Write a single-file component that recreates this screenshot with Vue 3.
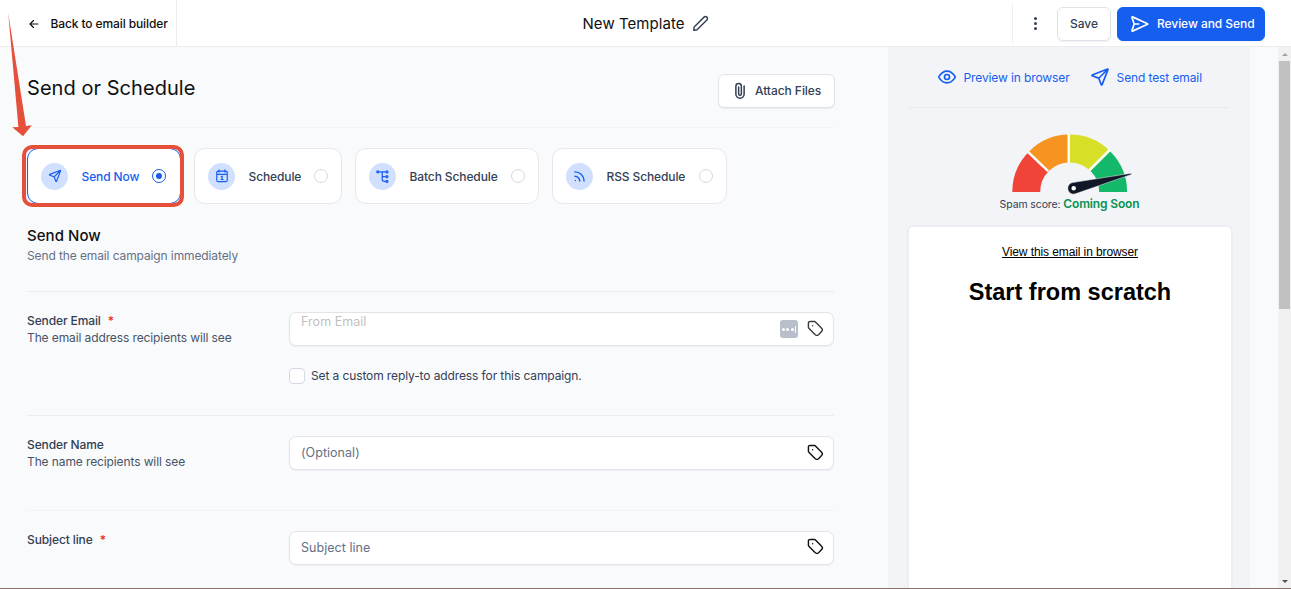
<script setup>
import { ref } from 'vue'

const icons = {
  back: 'M20 12H4M11 19l-7-7 7-7',
  pencil: 'M2.876 18.116c.046-.414.069-.62.131-.814a2 2 0 0 1 .234-.485c.111-.17.258-.317.553-.61L17 3a2.828 2.828 0 1 1 4 4L7.794 20.206c-.294.294-.442.442-.611.553a2 2 0 0 1-.485.233c-.193.063-.4.086-.814.132L2.5 21.5z',
  review: 'M10.5 12H5M4.915 12.292l-2.334 6.974c-.184.548-.275.822-.21.99a.5.5 0 0 0 .331.3c.175.05.438-.07.965-.306l16.71-7.52c.514-.231.771-.347.85-.508a.5.5 0 0 0 0-.443c-.079-.16-.336-.276-.85-.508L3.661 3.75c-.525-.237-.788-.355-.962-.307a.5.5 0 0 0-.331.3c-.066.168.025.442.207.99l2.341 7.05c.032.094.047.14.053.189a.5.5 0 0 1 0 .128c-.006.049-.022.096-.054.192z',
  clip: 'M17.5 5.25V16a5.5 5.5 0 0 1-11 0V5.667a3.667 3.667 0 0 1 7.333 0v10.279a1.833 1.833 0 0 1-3.666 0V6.6',
  send: 'M10.5 13.5 21 3M10.627 13.828l2.628 6.758c.232.596.347.893.514.98a.5.5 0 0 0 .462 0c.167-.086.283-.384.515-.979l6.59-16.888c.21-.537.315-.806.258-.977a.5.5 0 0 0-.316-.316c-.172-.057-.44.048-.978.257L3.413 9.253c-.595.233-.893.349-.98.516a.5.5 0 0 0 0 .461c.087.167.385.283.98.514l6.758 2.629c.121.047.182.07.233.106a.5.5 0 0 1 .116.117c.037.051.06.111.107.232z',
  eye: 'M2.42 12.713c-.136-.215-.204-.323-.242-.49a1.173 1.173 0 0 1 0-.446c.038-.167.106-.274.242-.49C3.546 9.505 6.895 5 12 5s8.455 4.505 9.58 6.287c.137.215.205.323.243.49.029.125.029.322 0 .446-.038.167-.106.274-.242.49C20.455 14.495 17.105 19 12 19c-5.106 0-8.455-4.505-9.58-6.287zM15 12a3 3 0 1 1-6 0 3 3 0 0 1 6 0z',
  tag: 'M8 8h.01M2 5.2v4.475c0 .489 0 .733.055.963.05.204.13.4.24.579.123.201.296.374.642.72l7.669 7.669c1.188 1.188 1.782 1.782 2.467 2.004a3 3 0 0 0 1.854 0c.685-.222 1.28-.816 2.467-2.004l2.212-2.212c1.188-1.188 1.782-1.782 2.004-2.467a3 3 0 0 0 0-1.854c-.222-.685-.816-1.28-2.004-2.467l-7.669-7.669c-.346-.346-.519-.519-.72-.642a2 2 0 0 0-.579-.24C10.409 2 10.165 2 9.676 2H5.2c-1.12 0-1.68 0-2.108.218a2 2 0 0 0-.874.874C2 3.52 2 4.08 2 5.2z',
  calendar: 'M3 9.2h18M7 1.6v4M17 1.6v4M5.5 3.6h13A2.5 2.5 0 0 1 21 6.1v13a2.5 2.5 0 0 1-2.5 2.5h-13A2.5 2.5 0 0 1 3 19.1v-13a2.5 2.5 0 0 1 2.5-2.5zM10.8 13.2l1.4-1v5.6M10.4 18h3.6',
  batch: 'M5 3.600H18.400M11.500 3.600V17a4 4 0 0 0 4 4H18.400M11.500 12.300H18.400M5 3.600a1.800 1.800 0 1 1-3.600 0 1.800 1.800 0 0 1 3.600 0zM22 3.600a1.800 1.800 0 1 1-3.600 0 1.800 1.800 0 0 1 3.600 0zM22 12.300a1.800 1.800 0 1 1-3.600 0 1.800 1.800 0 0 1 3.600 0zM22 21a1.800 1.800 0 1 1-3.600 0 1.800 1.800 0 0 1 3.600 0z',
  rss: 'M3.500 11.500a9 9 0 0 1 9 9M3.500 3.500a17 17 0 0 1 17 17M4.500 19.500h.01',
}

const selected = ref('now')

const modes = [
  { id: 'now', label: 'Send Now', icon: icons.send },
  { id: 'schedule', label: 'Schedule', icon: icons.calendar },
  { id: 'batch', label: 'Batch Schedule', icon: icons.batch },
  { id: 'rss', label: 'RSS Schedule', icon: icons.rss },
]

const fields = [
  { id: 'email', label: 'Sender Email', hint: 'The email address recipients will see', placeholder: 'From Email', required: true },
  { id: 'name', label: 'Sender Name', hint: 'The name recipients will see', placeholder: '(Optional)' },
  { id: 'subject', label: 'Subject line', placeholder: 'Subject line', required: true },
]
</script>

<template>
  <div class="page">
    <header class="topbar">
      <a class="topbar__back">
        <svg class="icon icon--back" viewBox="0 0 24 24"><path :d="icons.back" /></svg>
        <span>Back to email builder</span>
      </a>
      <div class="topbar__title">
        <span>New Template</span>
        <svg class="icon icon--pencil" viewBox="0 0 24 24"><path :d="icons.pencil" /></svg>
      </div>
      <div class="topbar__actions">
        <span class="topbar__more"><i></i><i></i><i></i></span>
        <button class="btn btn--save">Save</button>
        <button class="btn btn--primary">
          <svg class="icon icon--review" viewBox="0 0 24 24"><path :d="icons.review" /></svg>
          <span>Review and Send</span>
        </button>
      </div>
    </header>

    <div class="body">
      <main class="main">
        <div class="main__head">
          <h1>Send or Schedule</h1>
          <button class="btn btn--attach">
            <svg class="icon icon--clip" viewBox="0 0 24 24"><path :d="icons.clip" /></svg>
            <span>Attach Files</span>
          </button>
        </div>

        <div class="modes">
          <div
            v-for="mode in modes"
            :key="mode.id"
            class="mode"
            :class="[`mode--${mode.id}`, { 'mode--active': mode.id === selected }]"
            @click="selected = mode.id"
          >
            <span class="mode__badge">
              <svg class="icon" viewBox="0 0 24 24"><path :d="mode.icon" /></svg>
            </span>
            <span class="mode__label">{{ mode.label }}</span>
            <span class="mode__radio"></span>
          </div>
        </div>

        <section class="intro">
          <h2>Send Now</h2>
          <p>Send the email campaign immediately</p>
        </section>

        <section v-for="field in fields" :key="field.id" class="row" :class="`row--${field.id}`">
          <div class="row__label">
            <div class="row__name">{{ field.label }}<b v-if="field.required">*</b></div>
            <div v-if="field.hint" class="row__hint">{{ field.hint }}</div>
          </div>
          <div class="row__control">
            <div class="input">
              <span class="input__placeholder">{{ field.placeholder }}</span>
              <span v-if="field.id === 'email'" class="input__manager"><i></i><i></i><i></i><u></u></span>
              <svg class="icon icon--tag" viewBox="0 0 24 24"><path :d="icons.tag" /></svg>
            </div>
            <label v-if="field.id === 'email'" class="check">
              <span class="check__box"></span>
              <span class="check__text">Set a custom reply-to address for this campaign.</span>
            </label>
          </div>
        </section>
      </main>

      <aside class="side">
        <div class="side__links">
          <a class="side__link">
            <svg class="icon icon--link" viewBox="0 0 24 24"><path :d="icons.eye" /></svg>
            <span>Preview in browser</span>
          </a>
          <a class="side__link">
            <svg class="icon icon--link" viewBox="0 0 24 24"><path :d="icons.send" /></svg>
            <span>Send test email</span>
          </a>
        </div>
        <svg class="gauge" viewBox="0 0 124 64">
          <path fill="#f04438" d="M2.300 60A57.400 57.400 0 0 1 19.100 19.400L38.800 39.100A29.500 29.500 0 0 0 30.200 60z" />
          <path fill="#f79421" d="M19.100 19.400A57.400 57.400 0 0 1 59.700 2.600V30.500A29.500 29.500 0 0 0 38.800 39.100z" />
          <path fill="#d7df27" d="M59.700 2.600A57.400 57.400 0 0 1 100.300 19.400L80.600 39.100A29.500 29.500 0 0 0 59.700 30.500z" />
          <path fill="#14b869" d="M100.300 19.400A57.400 57.400 0 0 1 117.100 60H89.200A29.500 29.500 0 0 0 80.600 39.100z" />
          <path stroke="#fff" stroke-width="2.400" d="M17.600 19.700l20.500 19.500M58.700 2v29M100 17.700L79.500 38.200" />
          <path
            fill="#101828"
            stroke="#f2f4f7"
            stroke-width=".5"
            d="M121.500 41.200v1.200L65.400 61.800A5.800 5.800 0 1 1 62.500 50.600z"
          />
          <circle cx="63.700" cy="56.300" r="2.200" fill="#fff" />
        </svg>
        <div class="score">Spam score: <b>Coming Soon</b></div>
        <div class="mail">
          <a class="mail__link">View this email in browser</a>
          <div class="mail__title">Start from scratch</div>
        </div>
      </aside>

      <div class="gutter"></div>
      <div class="scrollbar">
        <span class="scrollbar__up"></span>
        <span class="scrollbar__thumb"></span>
        <span class="scrollbar__down"></span>
      </div>
    </div>

    <!-- callout pointing at the selected mode -->
    <div class="callout-box"></div>
    <svg class="callout-arrow" viewBox="0 0 40 140">
      <path d="M8.200 13 26 126l5.900-.7L23 136.200 12.300 127.300l6.100-.4z" />
    </svg>
  </div>
</template>

<style>
body {
  margin: 0;
  overflow: hidden;
}
</style>

<style scoped>
.page {
  position: relative;
  display: flex;
  flex-direction: column;
  box-sizing: border-box;
  width: 1291px;
  height: 589px;
  overflow: hidden;
  border-bottom: 1px solid #8c706e;
  background: #f9fafc;
  font-family: Inter, 'Liberation Sans', sans-serif;
  font-size: 12px;
  line-height: 16px;
  letter-spacing: -0.11px;
  color: #344054;
}

.page * {
  box-sizing: border-box;
}

h1,
h2,
p {
  margin: 0;
  font-weight: 400;
}

span,
a,
.row__name,
.row__hint,
.score {
  white-space: nowrap;
}

.icon {
  display: block;
  flex: none;
  fill: none;
  stroke: currentColor;
  stroke-width: 2;
  stroke-linecap: round;
  stroke-linejoin: round;
}

.topbar {
  display: grid;
  grid-template-columns: 177px 1fr 279px;
  flex: none;
  height: 47px;
  border-bottom: 1px solid #eaecf0;
  background: #fff;
}

.topbar__back {
  display: flex;
  align-items: center;
  gap: 11px;
  padding: 1px 0 0 27.500px;
  border-right: 1px solid #eaecf0;
  font-weight: 500;
  color: #101010;
}

.icon--back {
  width: 12px;
  height: 12px;
  stroke-width: 2.300;
}

.topbar__title {
  display: flex;
  align-items: center;
  gap: 7px;
  padding: 1px 0 0 405.500px;
  font-size: 15px;
  letter-spacing: 0.05px;
  color: #101010;
}

.icon--pencil {
  width: 17px;
  height: 17px;
  color: #344054;
}

.topbar__actions {
  display: flex;
  align-items: center;
  padding-top: 1px;
}

.topbar__actions::before {
  content: '';
  align-self: flex-start;
  width: 1px;
  height: 42px;
  margin-top: 1px;
  background: #f0f1f4;
}

.topbar__more {
  display: flex;
  flex-direction: column;
  gap: 2px;
  margin: 0 20px 0 21px;
}

.topbar__more i {
  width: 3px;
  height: 3px;
  border-radius: 50%;
  background: #344054;
}

.btn {
  display: flex;
  align-items: center;
  height: 34px;
  padding: 0;
  border: 1px solid #dfe2e8;
  border-radius: 6px;
  background: #fff;
  box-shadow: 0 1px 1px rgba(16, 24, 40, 0.06);
  font: 500 12px/16px Inter, sans-serif;
  letter-spacing: -0.06px;
  color: #344054;
}

.btn--save {
  justify-content: center;
  width: 54px;
}

.btn--primary {
  gap: 7px;
  width: 148px;
  margin-left: 6px;
  padding-left: 12px;
  border-color: #155eef;
  background: #155eef;
  color: #fff;
}

.icon--review {
  width: 20px;
  height: 20px;
}

.btn--attach {
  gap: 6px;
  width: 117px;
  margin-right: -1px;
  padding-left: 12px;
}

.icon--clip {
  width: 18px;
  height: 18px;
}

.body {
  display: flex;
  flex: 1;
  min-height: 0;
}

.main {
  width: 888px;
  padding: 0 54px 0 27px;
}

.main__head {
  display: flex;
  justify-content: space-between;
  height: 81px;
  padding-top: 27px;
  border-bottom: 1px solid #f1f2f5;
}

.main__head h1 {
  font-size: 20px;
  line-height: 28px;
  letter-spacing: 0.05px;
  color: #101010;
}

.modes {
  display: flex;
  gap: 13px;
  height: 76px;
  padding-top: 20px;
}

.mode {
  display: flex;
  align-items: center;
  flex: none;
  height: 56px;
  padding: 0 13px;
  border: 1px solid #e6e8ec;
  border-radius: 11px;
  background: #fff;
  font-weight: 500;
}

.mode--now {
  width: 154px;
}

.mode--schedule {
  width: 148px;
}

.mode--batch {
  width: 184px;
}

.mode--rss {
  width: 175px;
}

.mode__badge {
  display: flex;
  align-items: center;
  justify-content: center;
  width: 27px;
  height: 27px;
  margin-right: 13.500px;
  border-radius: 50%;
  background: #d1e0ff;
  color: #155eef;
}

.mode__label {
  padding-top: 1px;
}

.mode__badge .icon {
  width: 14px;
  height: 14px;
}

.mode--batch .icon {
  width: 13px;
  height: 13px;
  stroke-width: 2.300;
}

.mode--rss .icon {
  width: 13px;
  height: 13px;
  stroke-width: 2.600;
}

.mode__radio {
  display: flex;
  align-items: center;
  justify-content: center;
  width: 14px;
  height: 14px;
  margin-left: auto;
  border: 1px solid #d5d9e0;
  border-radius: 50%;
  background: #fff;
}

.mode--active {
  padding-right: 14px;
  border-color: #155eef;
  color: #155eef;
}

.mode--active .mode__radio {
  border-color: #155eef;
}

.mode--active .mode__radio::after {
  content: '';
  width: 6px;
  height: 6px;
  border-radius: 50%;
  background: #155eef;
}

.intro {
  height: 87px;
  padding-top: 22px;
}

.intro h2 {
  font-size: 15px;
  font-weight: 500;
  line-height: 20px;
  letter-spacing: 0.05px;
  color: #101010;
}

.intro p {
  margin-top: 2px;
  color: #667085;
}

.row {
  display: grid;
  grid-template-columns: 262px 1fr;
  border-top: 1px solid #eaecf0;
}

.row--email {
  height: 124px;
}

.row--name {
  height: 95px;
}

.row--subject {
  border-top-color: #f1f2f5;
}

.row__label {
  padding-top: 21px;
  color: #475467;
}

.row__name {
  font-weight: 500;
  color: #344054;
}

.row__name b {
  margin-left: 7px;
  font-weight: 500;
  color: #e02b2b;
}

.row__hint {
  margin-top: 1px;
}

.row__control {
  padding-top: 20px;
}

.row--subject .row__control {
  padding-top: 19.500px;
}

.input {
  display: flex;
  align-items: center;
  height: 34px;
  padding: 0 9px 0 11px;
  border: 1px solid #e2e4ea;
  border-radius: 7px;
  background: #fff;
  box-shadow: 0 1px 1px rgba(16, 24, 40, 0.05);
}

.input__placeholder {
  margin-right: auto;
  font-size: 12.500px;
  letter-spacing: 0.04px;
  color: #667085;
}

.row--email .input__placeholder {
  align-self: flex-start;
  padding-top: 1px;
  color: #bfbfbf;
}

.input__manager {
  display: flex;
  align-items: center;
  justify-content: center;
  gap: 1.500px;
  width: 18px;
  height: 18px;
  margin-right: 9px;
  border-radius: 3px;
  background: #b8bfcb;
}

.input__manager i {
  width: 3px;
  height: 3px;
  border-radius: 50%;
  background: #fff;
}

.input__manager u {
  width: 1px;
  height: 7px;
  background: #fff;
}

.icon--tag {
  width: 17px;
  height: 17px;
  margin-bottom: 1.500px;
  color: #101010;
}

.row--email .icon--tag {
  color: #3a3a3a;
}

.check {
  display: flex;
  align-items: center;
  gap: 6px;
  margin-top: 21px;
}

.check__box {
  width: 16px;
  height: 16px;
  border: 1px solid #d5d9e2;
  border-radius: 4px;
  background: #fff;
}

.check__text {
  padding-top: 1px;
}

.side {
  display: flex;
  flex-direction: column;
  align-items: center;
  width: 362px;
  padding: 0 18px 0 20px;
  background: #f2f4f7;
}

.side__links {
  display: flex;
  align-items: center;
  align-self: flex-start;
  gap: 20px;
  width: 321px;
  height: 61px;
  padding-left: 28.500px;
  border-bottom: 1px solid #e8eaee;
  color: #155eef;
}

.side__link {
  display: flex;
  align-items: center;
  gap: 7px;
}

.side__link span {
  padding-top: 1px;
}

.icon--link {
  width: 20px;
  height: 20px;
}

.gauge {
  width: 124px;
  height: 64px;
  margin: 24px 0 0 3px;
  fill: none;
}

.score {
  margin-right: 1px;
  font-size: 10.500px;
}

.score b {
  font-size: 12px;
  font-weight: 600;
  letter-spacing: -0.15px;
  color: #099250;
}

.mail {
  display: flex;
  flex-direction: column;
  align-items: center;
  flex: 1;
  width: 324px;
  margin-top: 13px;
  padding-top: 18px;
  border: 1px solid #eceef2;
  border-bottom: 0;
  border-radius: 5px 5px 0 0;
  background: #fff;
  box-shadow: 0 0 2px rgba(16, 24, 40, 0.08);
  font-family: 'Liberation Sans', Arial, sans-serif;
  letter-spacing: 0;
  color: #000;
}

.mail__link {
  font-size: 12px;
  line-height: 14px;
  letter-spacing: -0.1px;
  text-decoration: underline;
}

.mail__title {
  margin-top: 18px;
  font-size: 23.500px;
  font-weight: 700;
  line-height: 30px;
}

.gutter {
  width: 28px;
}

.scrollbar {
  display: flex;
  flex-direction: column;
  align-items: center;
  width: 13px;
  background: #f1f1f1;
}

.scrollbar__up {
  margin: 6px 0 5px;
  border: 3px solid transparent;
  border-top: 0;
  border-bottom-color: #a3a3a3;
}

.scrollbar__thumb {
  width: 11px;
  height: 248px;
  background: #c1c1c1;
}

.scrollbar__down {
  margin: auto 0 5px;
  border: 3px solid transparent;
  border-bottom: 0;
  border-top-color: #505050;
}

.callout-box {
  position: absolute;
  top: 145px;
  left: 22px;
  width: 162px;
  height: 62px;
  border: 4px solid #e4503b;
  border-radius: 10px;
}

.callout-arrow {
  position: absolute;
  top: 0;
  left: 0;
  width: 40px;
  height: 140px;
  fill: #e4503b;
}
</style>
